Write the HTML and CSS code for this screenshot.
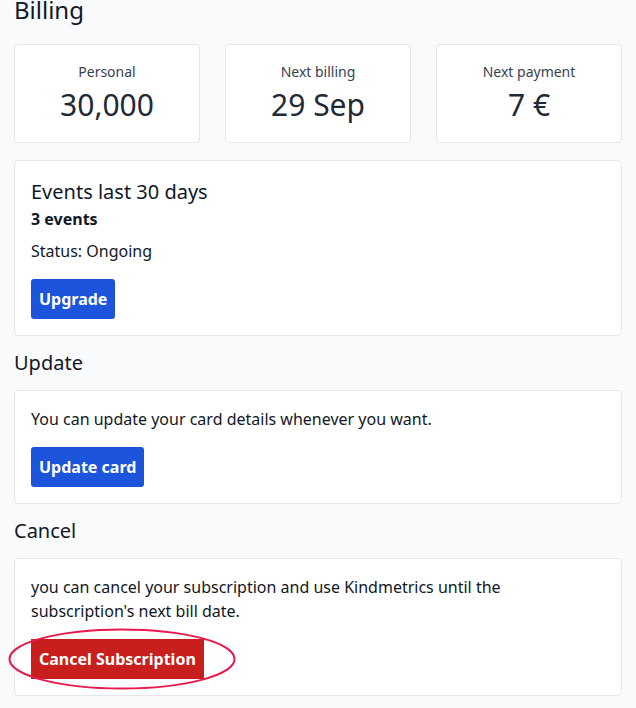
FILE: index.html
```html
<!DOCTYPE html>
<html lang="en">
<head>
<meta charset="utf-8">
<title>Billing</title>
<link rel="stylesheet" href="styles.css">
</head>
<body>
<main class="page">
  <h1 class="title">Billing</h1>
  <section class="stats">
    <div class="stat">
      <div class="stat-label">Personal</div>
      <div class="stat-value">30,000</div>
    </div>
    <div class="stat">
      <div class="stat-label">Next billing</div>
      <div class="stat-value">29 Sep</div>
    </div>
    <div class="stat">
      <div class="stat-label">Next payment</div>
      <div class="stat-value">7 €</div>
    </div>
  </section>

  <section class="card card-events">
    <h2 class="card-title">Events last 30 days</h2>
    <p class="events">3 events</p>
    <p class="text status">Status: Ongoing</p>
    <button class="btn btn-blue">Upgrade</button>
  </section>

  <h2 class="section-title">Update</h2>
  <section class="card">
    <p class="text">You can update your card details whenever you want.</p>
    <button class="btn btn-blue">Update card</button>
  </section>

  <h2 class="section-title">Cancel</h2>
  <section class="card">
    <p class="text">you can cancel your subscription and use Kindmetrics until the subscription's next bill date.</p>
    <div class="cancel-wrap">
      <button class="btn btn-red">Cancel Subscription</button>
      <svg class="ring" width="228" height="62" viewBox="0 0 228 62" aria-hidden="true">
        <ellipse cx="114" cy="31" rx="112.5" ry="29.5" fill="none" stroke="#e8194b" stroke-width="2"/>
      </svg>
    </div>
  </section>
</main>
</body>
</html>
```

FILE: styles.css
```css
* { box-sizing: border-box; }
html, body {
  margin: 0;
  padding: 0;
  background: #f9fafb;
  font-family: "Noto Sans", "Open Sans", sans-serif;
  color: #111827;
}
.page {
  padding: 0 14px 0 14px;
  width: 636px;
  height: 708px;
  overflow: hidden;
}
.title {
  margin: -6px 0 0 0;
  font-size: 24px;
  line-height: 32px;
  font-weight: 400;
}
.stats {
  display: grid;
  grid-template-columns: repeat(3, 1fr);
  gap: 25px;
  margin-top: 18px;
}
.stat {
  background: #fff;
  border: 1px solid #e5e7eb;
  border-radius: 4px;
  padding: 17px 8px 17px;
  text-align: center;
  color: #1f2937;
}
.stat-label {
  font-size: 14px;
  line-height: 20px;
  color: #374151;
}
.stat-value {
  margin-top: 3px;
  font-size: 30px;
  line-height: 40px;
}
.card {
  background: #fff;
  border: 1px solid #e5e7eb;
  border-radius: 4px;
  padding: 16px;
  margin-top: 17px;
}
.card-events { padding-top: 17px; }
.card-title {
  margin: 0;
  font-size: 20px;
  line-height: 28px;
  font-weight: 400;
}
.events {
  margin: 1px 0 0;
  font-size: 16px;
  line-height: 24px;
  font-weight: 700;
}
.text {
  margin: 0 0 16px;
  font-size: 16px;
  line-height: 24px;
}
.status { margin-top: 8px; }
.section-title {
  margin: 13px 0 0;
  font-size: 20px;
  line-height: 28px;
  font-weight: 400;
}
.section-title + .card { margin-top: 13px; }
.btn {
  display: block;
  height: 40px;
  padding: 0 8px;
  border: none;
  font-family: inherit;
  font-size: 16px;
  font-weight: 700;
  color: #fff;
}
.btn-blue {
  background: #1c54db;
  border-radius: 3px;
}
.btn-red {
  background: #c81e1e;
  border-radius: 0;
}
.cancel-wrap {
  position: relative;
}
.ring {
  position: absolute;
  left: -23px;
  top: -11px;
}
```
